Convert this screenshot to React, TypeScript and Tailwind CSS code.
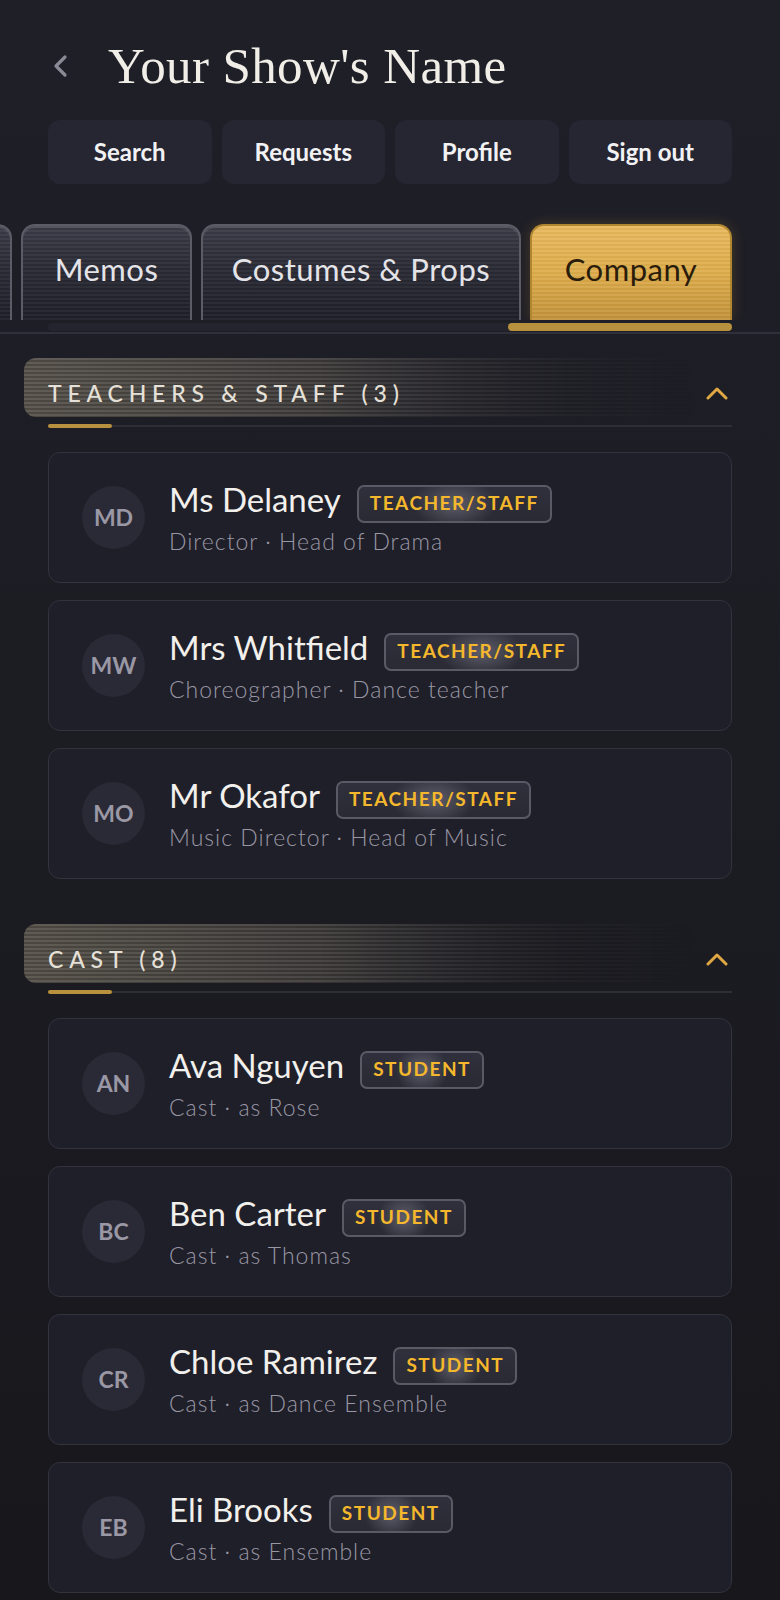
import React from "react";

const teachers = [
  { i: "MD", name: "Ms Delaney", sub: "Director · Head of Drama" },
  { i: "MW", name: "Mrs Whitfield", sub: "Choreographer · Dance teacher" },
  { i: "MO", name: "Mr Okafor", sub: "Music Director · Head of Music" },
];

const cast = [
  { i: "AN", name: "Ava Nguyen", sub: "Cast · as Rose" },
  { i: "BC", name: "Ben Carter", sub: "Cast · as Thomas" },
  { i: "CR", name: "Chloe Ramirez", sub: "Cast · as Dance Ensemble" },
  { i: "EB", name: "Eli Brooks", sub: "Cast · as Ensemble" },
];

function Tab({ label, className }: { label?: string; className: string }) {
  return (
    <div
      className={
        "shrink-0 h-[96px] rounded-t-[14px] border-[2.5px] border-b-0 border-[#5c5c67] flex items-center justify-center shadow-[inset_0_2px_0_rgba(255,255,255,0.10)] [background-image:repeating-linear-gradient(180deg,rgba(255,255,255,0.035)_0px,rgba(255,255,255,0.035)_2px,rgba(0,0,0,0.06)_2px,rgba(0,0,0,0.06)_4px),linear-gradient(180deg,#3d3d4a_0%,#2c2c37_45%,#20202a_100%)] " +
        className
      }
    >
      {label && <span className="text-[31px] tracking-[0.5px] text-[#e4e4e8] pb-[8px]">{label}</span>}
    </div>
  );
}

function ChevronUp() {
  return (
    <svg width="24" height="14" viewBox="0 0 24 14" className="mr-[1px]">
      <polyline
        points="3,12 12,3 21,12"
        fill="none"
        stroke="#e0a843"
        strokeWidth="3"
        strokeLinecap="round"
        strokeLinejoin="round"
      />
    </svg>
  );
}

function SectionHeader({ title }: { title: string }) {
  return (
    <div>
      <div className="relative -mx-[24px] h-[59px] rounded-[12px] overflow-hidden">
        <div className="absolute inset-0 [background-image:repeating-linear-gradient(180deg,rgba(255,255,255,0.07)_0px,rgba(255,255,255,0.07)_2px,rgba(0,0,0,0.10)_2px,rgba(0,0,0,0.10)_4px),linear-gradient(90deg,rgba(120,112,96,0.62)_0%,rgba(95,90,80,0.45)_45%,rgba(60,58,55,0.15)_75%,rgba(40,40,45,0)_92%)] [mask-image:linear-gradient(90deg,#000_0%,#000_40%,transparent_92%)]" />
        <div className="relative h-full flex items-center justify-between pl-[24px] pr-[26px] pt-[12px]">
          <span className="text-[23px] font-medium tracking-[5.8px] text-[#e6e1d8]">{title}</span>
          <ChevronUp />
        </div>
      </div>
      <div className="mt-[7px] flex items-center h-[4px]">
        <div className="w-[64px] h-[4px] rounded-full bg-[#b8913f]" />
        <div className="flex-1 h-[2px] bg-[#2e2e38]" />
      </div>
    </div>
  );
}

function Card({ i, name, sub, badge }: { i: string; name: string; sub: string; badge: string }) {
  return (
    <div className="h-[131px] rounded-[12px] border-[1.5px] border-[#33333e] bg-[#1f1f29] flex items-center pl-[33px]">
      <div className="w-[63px] h-[63px] shrink-0 rounded-full bg-[#2a2a36] flex items-center justify-center text-[23px] font-bold text-[#9b98a6]">
        {i}
      </div>
      <div className="ml-[24px] flex flex-col">
        <div className="flex items-start">
          <span className="text-[33px] leading-[38px] text-[#f2f0ec]">{name}</span>
          <span className="ml-[16px] mt-[5px] h-[38px] px-[11px] flex items-center rounded-[7px] border-2 border-[#5a5a67] text-[19px] font-bold tracking-[1.5px] text-[#f5b82c] [background-image:radial-gradient(ellipse_22%_75%_at_50%_50%,rgba(205,205,220,0.30),rgba(205,205,220,0)_100%),linear-gradient(180deg,#30303c,#2a2a35)]">
            {badge}
          </span>
        </div>
        <div className="mt-[4px] text-[23px] leading-[28px] font-light tracking-[1px] text-[#9a97a5]">{sub}</div>
      </div>
    </div>
  );
}

export default function App() {
  return (
    <div className="min-h-[1600px] h-[1600px] w-full overflow-hidden font-['Lato',sans-serif] text-white bg-[linear-gradient(180deg,#1f1f28_0%,#1c1c23_45%,#17171c_100%)]">
      <header className="px-[48px] pt-[41px]">
        <div className="flex items-center h-[50px]">
          <svg width="16" height="24" viewBox="0 0 16 24" className="ml-[4px]">
            <polyline
              points="13,3 4,12 13,21"
              fill="none"
              stroke="#8a8a96"
              strokeWidth="3.2"
              strokeLinecap="round"
              strokeLinejoin="round"
            />
          </svg>
          <h1 className="ml-[40px] font-['Liberation_Serif',serif] text-[51px] leading-[50px] tracking-[0.4px] text-[#f1eee8]">
            Your Show's Name
          </h1>
        </div>
        <nav className="mt-[29px] grid grid-cols-4 gap-[10px]">
          {["Search", "Requests", "Profile", "Sign out"].map((t) => (
            <div
              key={t}
              className="h-[64px] rounded-[12px] bg-[#262633] flex items-center justify-center text-[24px] font-bold text-[#f2f2f4]"
            >
              {t}
            </div>
          ))}
        </nav>
      </header>

      <div className="mt-[30px]">
        <div className="flex gap-[9px] overflow-hidden pt-[10px]">
          <Tab className="w-[150px] -ml-[138px]" />
          <Tab label="Memos" className="w-[171px]" />
          <Tab label="Costumes & Props" className="w-[320px]" />
          <div className="shrink-0 w-[202px] h-[96px] rounded-t-[14px] border-[2px] border-b-0 border-[#b08631] flex items-center justify-center shadow-[0_0_14px_rgba(225,165,60,0.22)] [background-image:repeating-linear-gradient(180deg,rgba(255,255,255,0.07)_0px,rgba(255,255,255,0.07)_2px,rgba(0,0,0,0.03)_2px,rgba(0,0,0,0.03)_4px),linear-gradient(180deg,#e8b85c_0%,#deac4a_50%,#c2923a_100%)]">
            <span className="text-[31px] tracking-[0.5px] text-[#2a1c0b] pb-[8px]">Company</span>
          </div>
        </div>
        <div className="mx-[48px] mt-[3px] h-[8px] rounded-full bg-[#24242e] flex justify-end">
          <div className="w-[224px] h-full rounded-full bg-[#b8913f]" />
        </div>
        <div className="mt-[1px] h-[1.5px] bg-[#30303a]" />
      </div>

      <main className="px-[48px] mt-[24px]">
        <SectionHeader title="TEACHERS & STAFF (3)" />
        <div className="mt-[24px] flex flex-col gap-[17px]">
          {teachers.map((p) => (
            <Card key={p.i} {...p} badge="TEACHER/STAFF" />
          ))}
        </div>

        <div className="mt-[45px]">
          <SectionHeader title="CAST (8)" />
        </div>
        <div className="mt-[24px] flex flex-col gap-[17px]">
          {cast.map((p) => (
            <Card key={p.i} {...p} badge="STUDENT" />
          ))}
        </div>
      </main>
    </div>
  );
}
